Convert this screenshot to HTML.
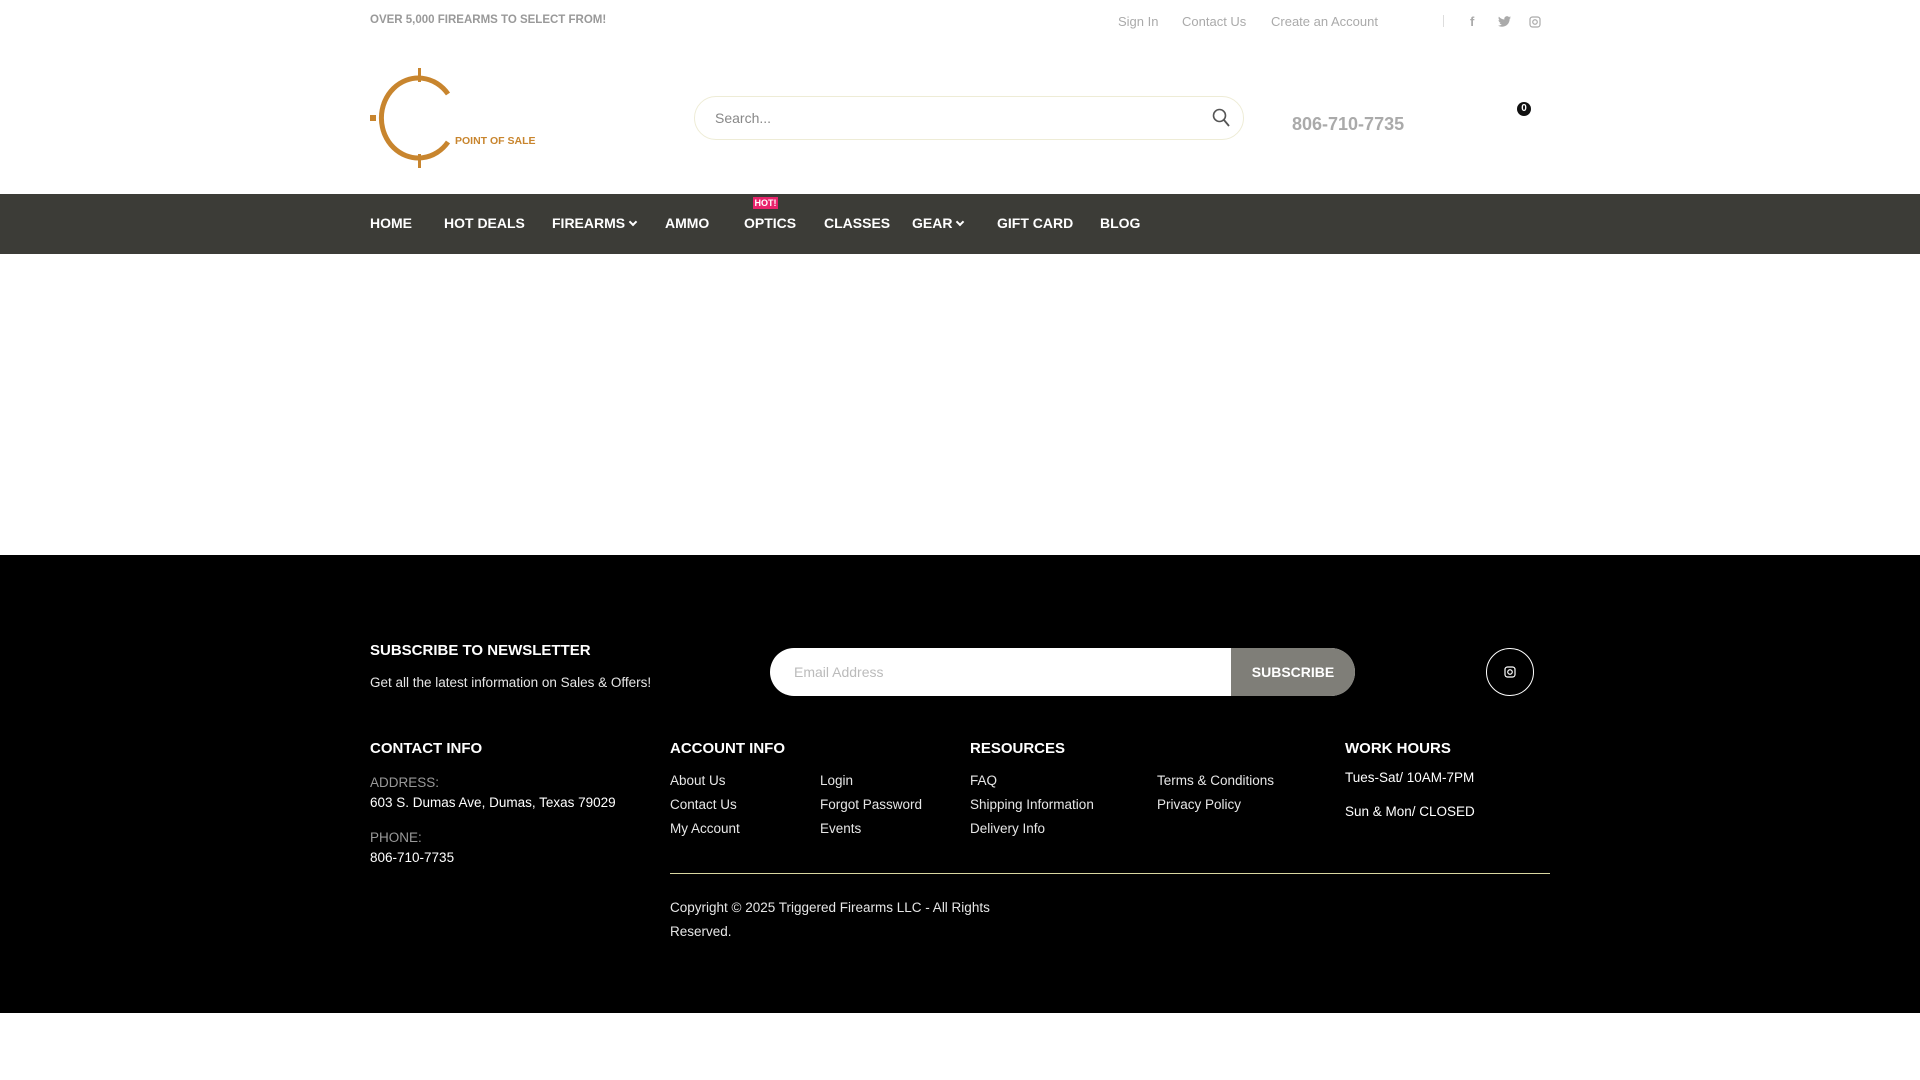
<!DOCTYPE html>
<html><head><style>
*{margin:0;padding:0;box-sizing:border-box}
body{width:1920px;height:1080px;background:#fff;font-family:"Liberation Sans",Arial,sans-serif;position:relative;overflow:hidden}
.a{position:absolute;white-space:nowrap}
.nav{position:absolute;left:0;top:194px;width:1920px;height:60px;background:#3c3c37}
.nav span{position:absolute;top:21px;color:#fff;font-weight:bold;font-size:14px}
.foot{position:absolute;left:0;top:555px;width:1920px;height:458px;background:#000}
.h{color:#fff;font-weight:bold;font-size:15px}
.l{color:#e6e6e6;font-size:13.5px}
.chev{display:inline-block;width:6px;height:6px;border-right:2px solid #fff;border-bottom:2px solid #fff;transform:rotate(45deg);margin-left:5px;position:relative;top:-3px}
</style></head><body>
<div class="a" style="left:370px;top:14px;font-size:11.5px;color:#999;font-weight:bold">OVER 5,000 FIREARMS TO SELECT FROM!</div>
<div class="a" style="left:1118px;top:14px;font-size:13px;color:#aaa">Sign In</div>
<div class="a" style="left:1182px;top:14px;font-size:13px;color:#aaa">Contact Us</div>
<div class="a" style="left:1271px;top:14px;font-size:13px;color:#aaa">Create an Account</div>
<div class="a" style="left:1443px;top:15px;width:1px;height:12px;background:#ddd"></div>
<div class="a" style="left:1470px;top:14px;font-size:13px;color:#aaa;font-weight:bold">f</div>
<svg class="a" style="left:1498px;top:16px" width="13" height="11" viewBox="0 0 24 20"><path d="M24 2.5a10 10 0 0 1-2.8.8A5 5 0 0 0 23.3.6a10 10 0 0 1-3.1 1.2A4.9 4.9 0 0 0 11.8 6.3 14 14 0 0 1 1.7 1.1a4.9 4.9 0 0 0 1.5 6.6A5 5 0 0 1 1 7v.1a4.9 4.9 0 0 0 3.9 4.8 5 5 0 0 1-2.2.1 4.9 4.9 0 0 0 4.6 3.4A9.9 9.9 0 0 1 0 17.5 14 14 0 0 0 7.5 19.7c9.1 0 14-7.5 14-14v-.6A10 10 0 0 0 24 2.5z" fill="#aaa"/></svg>
<svg class="a" style="left:1529px;top:16px" width="12" height="12" viewBox="0 0 24 24"><rect x="2" y="2" width="20" height="20" rx="5" fill="none" stroke="#aaa" stroke-width="2.4"/><circle cx="12" cy="12" r="4.5" fill="none" stroke="#aaa" stroke-width="2.4"/></svg>
<svg class="a" style="left:368px;top:68px" width="175" height="100" viewBox="0 0 175 100">
<path d="M80 26 A37 40 0 1 0 80 74" fill="none" stroke="#c8852e" stroke-width="5"/>
<rect x="50" y="0" width="3" height="14" fill="#c8852e"/><rect x="50" y="86" width="3" height="14" fill="#c8852e"/><rect x="2" y="47" width="6" height="6" fill="#c8852e"/>
<text x="87" y="76" font-family="Liberation Sans" font-size="10.5" font-weight="bold" fill="#c8852e">POINT OF SALE</text></svg>
<div class="a" style="left:694px;top:96px;width:550px;height:44px;border:1px solid #eeecd6;border-radius:22px"></div>
<div class="a" style="left:715px;top:110px;font-size:14px;color:#888">Search...</div>
<svg class="a" style="left:1212px;top:108px" width="18" height="19" viewBox="0 0 18 19"><circle cx="7.5" cy="7.5" r="6" fill="none" stroke="#555" stroke-width="1.6"/><path d="M12 12l5 6" stroke="#555" stroke-width="1.8"/></svg>
<div class="a" style="left:1292px;top:114px;font-size:18px;font-weight:bold;color:#aaa">806-710-7735</div>
<div class="a" style="left:1517px;top:102px;width:14px;height:14px;border-radius:7px;background:#111;color:#fff;font-size:10px;font-weight:bold;text-align:center;line-height:14px">0</div>
<div class="nav">
<span style="left:370px">HOME</span><span style="left:444px">HOT DEALS</span><span style="left:552px">FIREARMS<i class="chev"></i></span><span style="left:665px">AMMO</span><span style="left:744px">OPTICS</span><span style="left:824px">CLASSES</span><span style="left:912px">GEAR<i class="chev"></i></span><span style="left:997px">GIFT CARD</span><span style="left:1100px">BLOG</span>
<div class="a" style="left:753px;top:3px;width:25px;height:12px;background:#e8236b;color:#fff;font-size:9px;font-weight:bold;text-align:center;line-height:12px">HOT!</div>
</div>
<div class="foot"></div>
<div class="a h" style="left:370px;top:642px">SUBSCRIBE TO NEWSLETTER</div>
<div class="a l" style="left:370px;top:675px">Get all the latest information on Sales &amp; Offers!</div>
<div class="a" style="left:770px;top:648px;width:585px;height:48px;background:#fff;border-radius:24px;overflow:hidden">
<div class="a" style="left:24px;top:16px;font-size:14px;color:#bbb">Email Address</div>
<div class="a" style="left:461px;top:0;width:124px;height:48px;background:#7f7e78;color:#fff;font-weight:bold;font-size:14px;text-align:center;line-height:48px">SUBSCRIBE</div></div>
<div class="a" style="left:1486px;top:648px;width:48px;height:48px;border:1px solid #fff;border-radius:50%"></div>
<svg class="a" style="left:1504px;top:666px" width="12" height="12" viewBox="0 0 24 24"><rect x="2" y="2" width="20" height="20" rx="5" fill="none" stroke="#fff" stroke-width="2.4"/><circle cx="12" cy="12" r="4.5" fill="none" stroke="#fff" stroke-width="2.4"/></svg>
<div class="a h" style="left:370px;top:740px">CONTACT INFO</div>
<div class="a h" style="left:670px;top:740px">ACCOUNT INFO</div>
<div class="a h" style="left:970px;top:740px">RESOURCES</div>
<div class="a h" style="left:1345px;top:740px">WORK HOURS</div>
<div class="a" style="left:370px;top:775px;font-size:13.5px;color:#999">ADDRESS:</div>
<div class="a l" style="left:370px;top:795px;color:#fff">603 S. Dumas Ave, Dumas, Texas 79029</div>
<div class="a" style="left:370px;top:830px;font-size:13.5px;color:#999">PHONE:</div>
<div class="a l" style="left:370px;top:850px;color:#fff">806-710-7735</div>
<div class="a l" style="left:670px;top:773px">About Us</div><div class="a l" style="left:670px;top:797px">Contact Us</div><div class="a l" style="left:670px;top:821px">My Account</div>
<div class="a l" style="left:820px;top:773px">Login</div><div class="a l" style="left:820px;top:797px">Forgot Password</div><div class="a l" style="left:820px;top:821px">Events</div>
<div class="a l" style="left:970px;top:773px">FAQ</div><div class="a l" style="left:970px;top:797px">Shipping Information</div><div class="a l" style="left:970px;top:821px">Delivery Info</div>
<div class="a l" style="left:1157px;top:773px">Terms &amp; Conditions</div><div class="a l" style="left:1157px;top:797px">Privacy Policy</div>
<div class="a l" style="left:1345px;top:770px;color:#fff">Tues-Sat/ 10AM-7PM</div>
<div class="a l" style="left:1345px;top:804px;color:#fff">Sun &amp; Mon/ CLOSED</div>
<div class="a" style="left:670px;top:873px;width:880px;height:1px;background:#d8d6a0"></div>
<div class="a l" style="left:670px;top:900px">Copyright © 2025 Triggered Firearms LLC - All Rights</div>
<div class="a l" style="left:670px;top:924px">Reserved.</div>
</body></html>
